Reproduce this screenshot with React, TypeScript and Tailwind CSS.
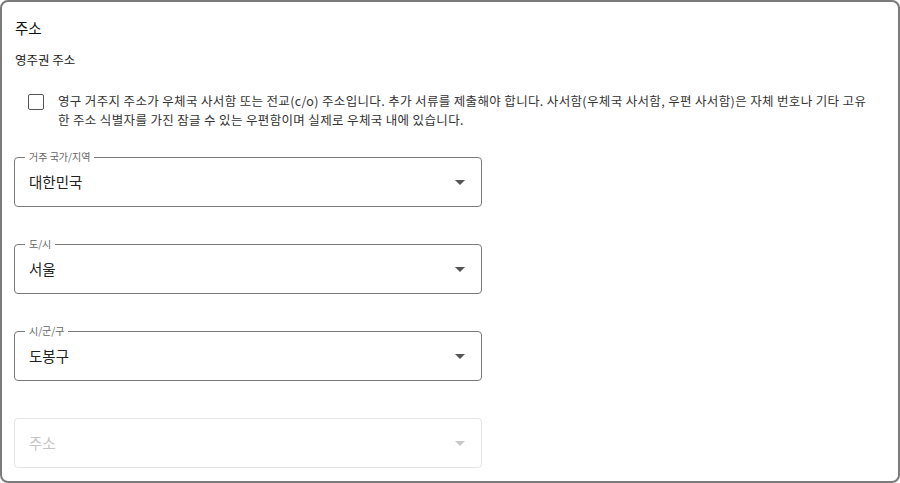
const font = { fontFamily: '"Noto Sans CJK KR", "Noto Sans", sans-serif' }

type SelectProps = {
    label?: string,
    value: string,
    disabled?: boolean,
}

function Caret({ disabled }: { disabled?: boolean }) {
    return (
        <svg width="10" height="5" viewBox="0 0 10 5" className="shrink-0">
            <path d="M0 0 L10 0 L5 5 Z" fill={disabled ? '#c8c8c8' : '#555555'} />
        </svg>
    )
}

function OutlinedSelect({ label, value, disabled }: SelectProps) {
    return (
        <div
            className={`relative flex items-center justify-between w-[468px] h-[50px] rounded-[4px] border pl-[14px] pr-[16px] ${disabled ? 'border-[#e4e4e4]' : 'border-[#7a7a7a]'}`}
        >
            {label && (
                <span className="absolute left-[10px] top-[-7px] bg-white px-[4px] text-[10px] leading-[12px] text-[#666666]">{label}</span>
            )}
            <span className={`text-[14.5px] leading-[20px] ${disabled ? 'text-[#c4c4c4]' : 'text-[#222222]'}`}>{value}</span>
            <Caret disabled={disabled} />
        </div>
    )
}

export default function App() {
    return (
        <div className="w-[900px] h-[483px] bg-white" style={font}>
            <div className="h-full border-2 border-[#7b7b7b] rounded-[8px] px-[13px] pt-[16px] text-[#222222]">
                <h2 className="text-[14.5px] leading-[20px] text-[#111111]">주소</h2>
                <p className="mt-[12px] text-[12.5px] leading-[20px]">영주권 주소</p>
                <label className="flex items-start mt-[21px] ml-[13px]">
                    <span className="mt-[3px] w-[16px] h-[16px] shrink-0 border-[1.5px] border-[#555555] rounded-[2px]"></span>
                    <span className="ml-[14px] pr-[16px] text-[12.5px] leading-[19px] tracking-[0.35px] text-[#333333]">
                        영구 거주지 주소가 우체국 사서함 또는 전교(c/o) 주소입니다. 추가 서류를 제출해야 합니다. 사서함(우체국 사서함, 우편 사서함)은 자체 번호나 기타 고유한 주소 식별자를 가진 잠글 수 있는 우편함이며 실제로 우체국 내에 있습니다.
                    </span>
                </label>
                <div className="flex flex-col gap-[37px] mt-[28px] -ml-[1px]">
                    <OutlinedSelect label="거주 국가/지역" value="대한민국" />
                    <OutlinedSelect label="도/시" value="서울" />
                    <OutlinedSelect label="시/군/구" value="도봉구" />
                    <OutlinedSelect value="주소" disabled />
                </div>
            </div>
        </div>
    )
}
